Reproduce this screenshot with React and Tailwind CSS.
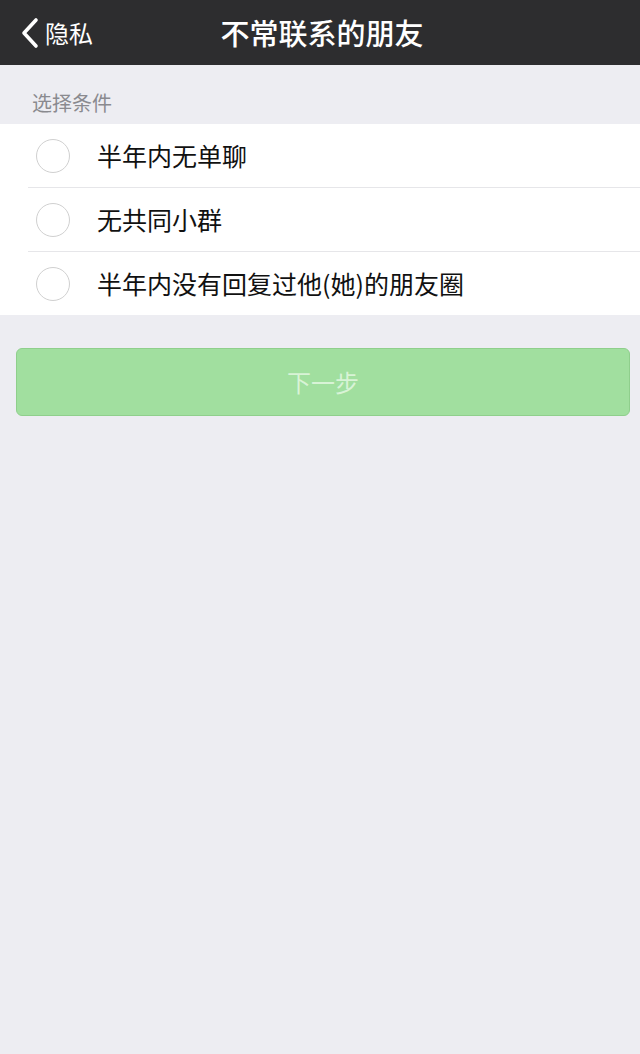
const options = ['半年内无单聊', '无共同小群', '半年内没有回复过他(她)的朋友圈'];

export default function App() {
  return (
    <div
      className="min-h-[1054px] w-[640px] bg-[#ededf2]"
      style={{ fontFamily: '"Noto Sans CJK SC", "Noto Sans", sans-serif' }}
    >
      <header className="relative flex h-[65px] items-center justify-center bg-[#2d2d2f]">
        <div className="absolute left-[20px] top-0 flex h-full items-center text-[24px] text-white">
          <svg width="20" height="32" viewBox="0 0 20 32" className="mr-[5px]">
            <path d="M16 3 L4 16 L16 29" fill="none" stroke="white" strokeWidth="3.6" strokeLinecap="round" strokeLinejoin="round" />
          </svg>
          <span>隐私</span>
        </div>
        <h1 className="ml-[4px] text-[29px] font-medium text-white">不常联系的朋友</h1>
      </header>

      <div className="px-[32px] pb-[9px] pt-[26px] text-[20px] leading-[24px] text-[#8a8a8f]">选择条件</div>

      <ul className="bg-white">
        {options.map((text, i) => (
          <li key={text}>
            {i > 0 && <div className="ml-[28px] h-px bg-[#e6e6e9]" />}
            <div className="flex h-[63px] items-center pl-[36px]">
              <span className="h-[34px] w-[34px] shrink-0 rounded-full border-[1.5px] border-[#d0d0d0]" />
              <span className="ml-[27px] text-[25px] text-[#111]">{text}</span>
            </div>
          </li>
        ))}
      </ul>

      <div className="pl-[16px] pr-[10px] pt-[33px]">
        <button
          type="button"
          disabled
          className="flex h-[68px] w-full items-center justify-center rounded-[6px] border border-[#8fcf8c] bg-[#a1df9f] text-[24px] text-[#d8f3d6]"
        >
          下一步
        </button>
      </div>
    </div>
  );
}
